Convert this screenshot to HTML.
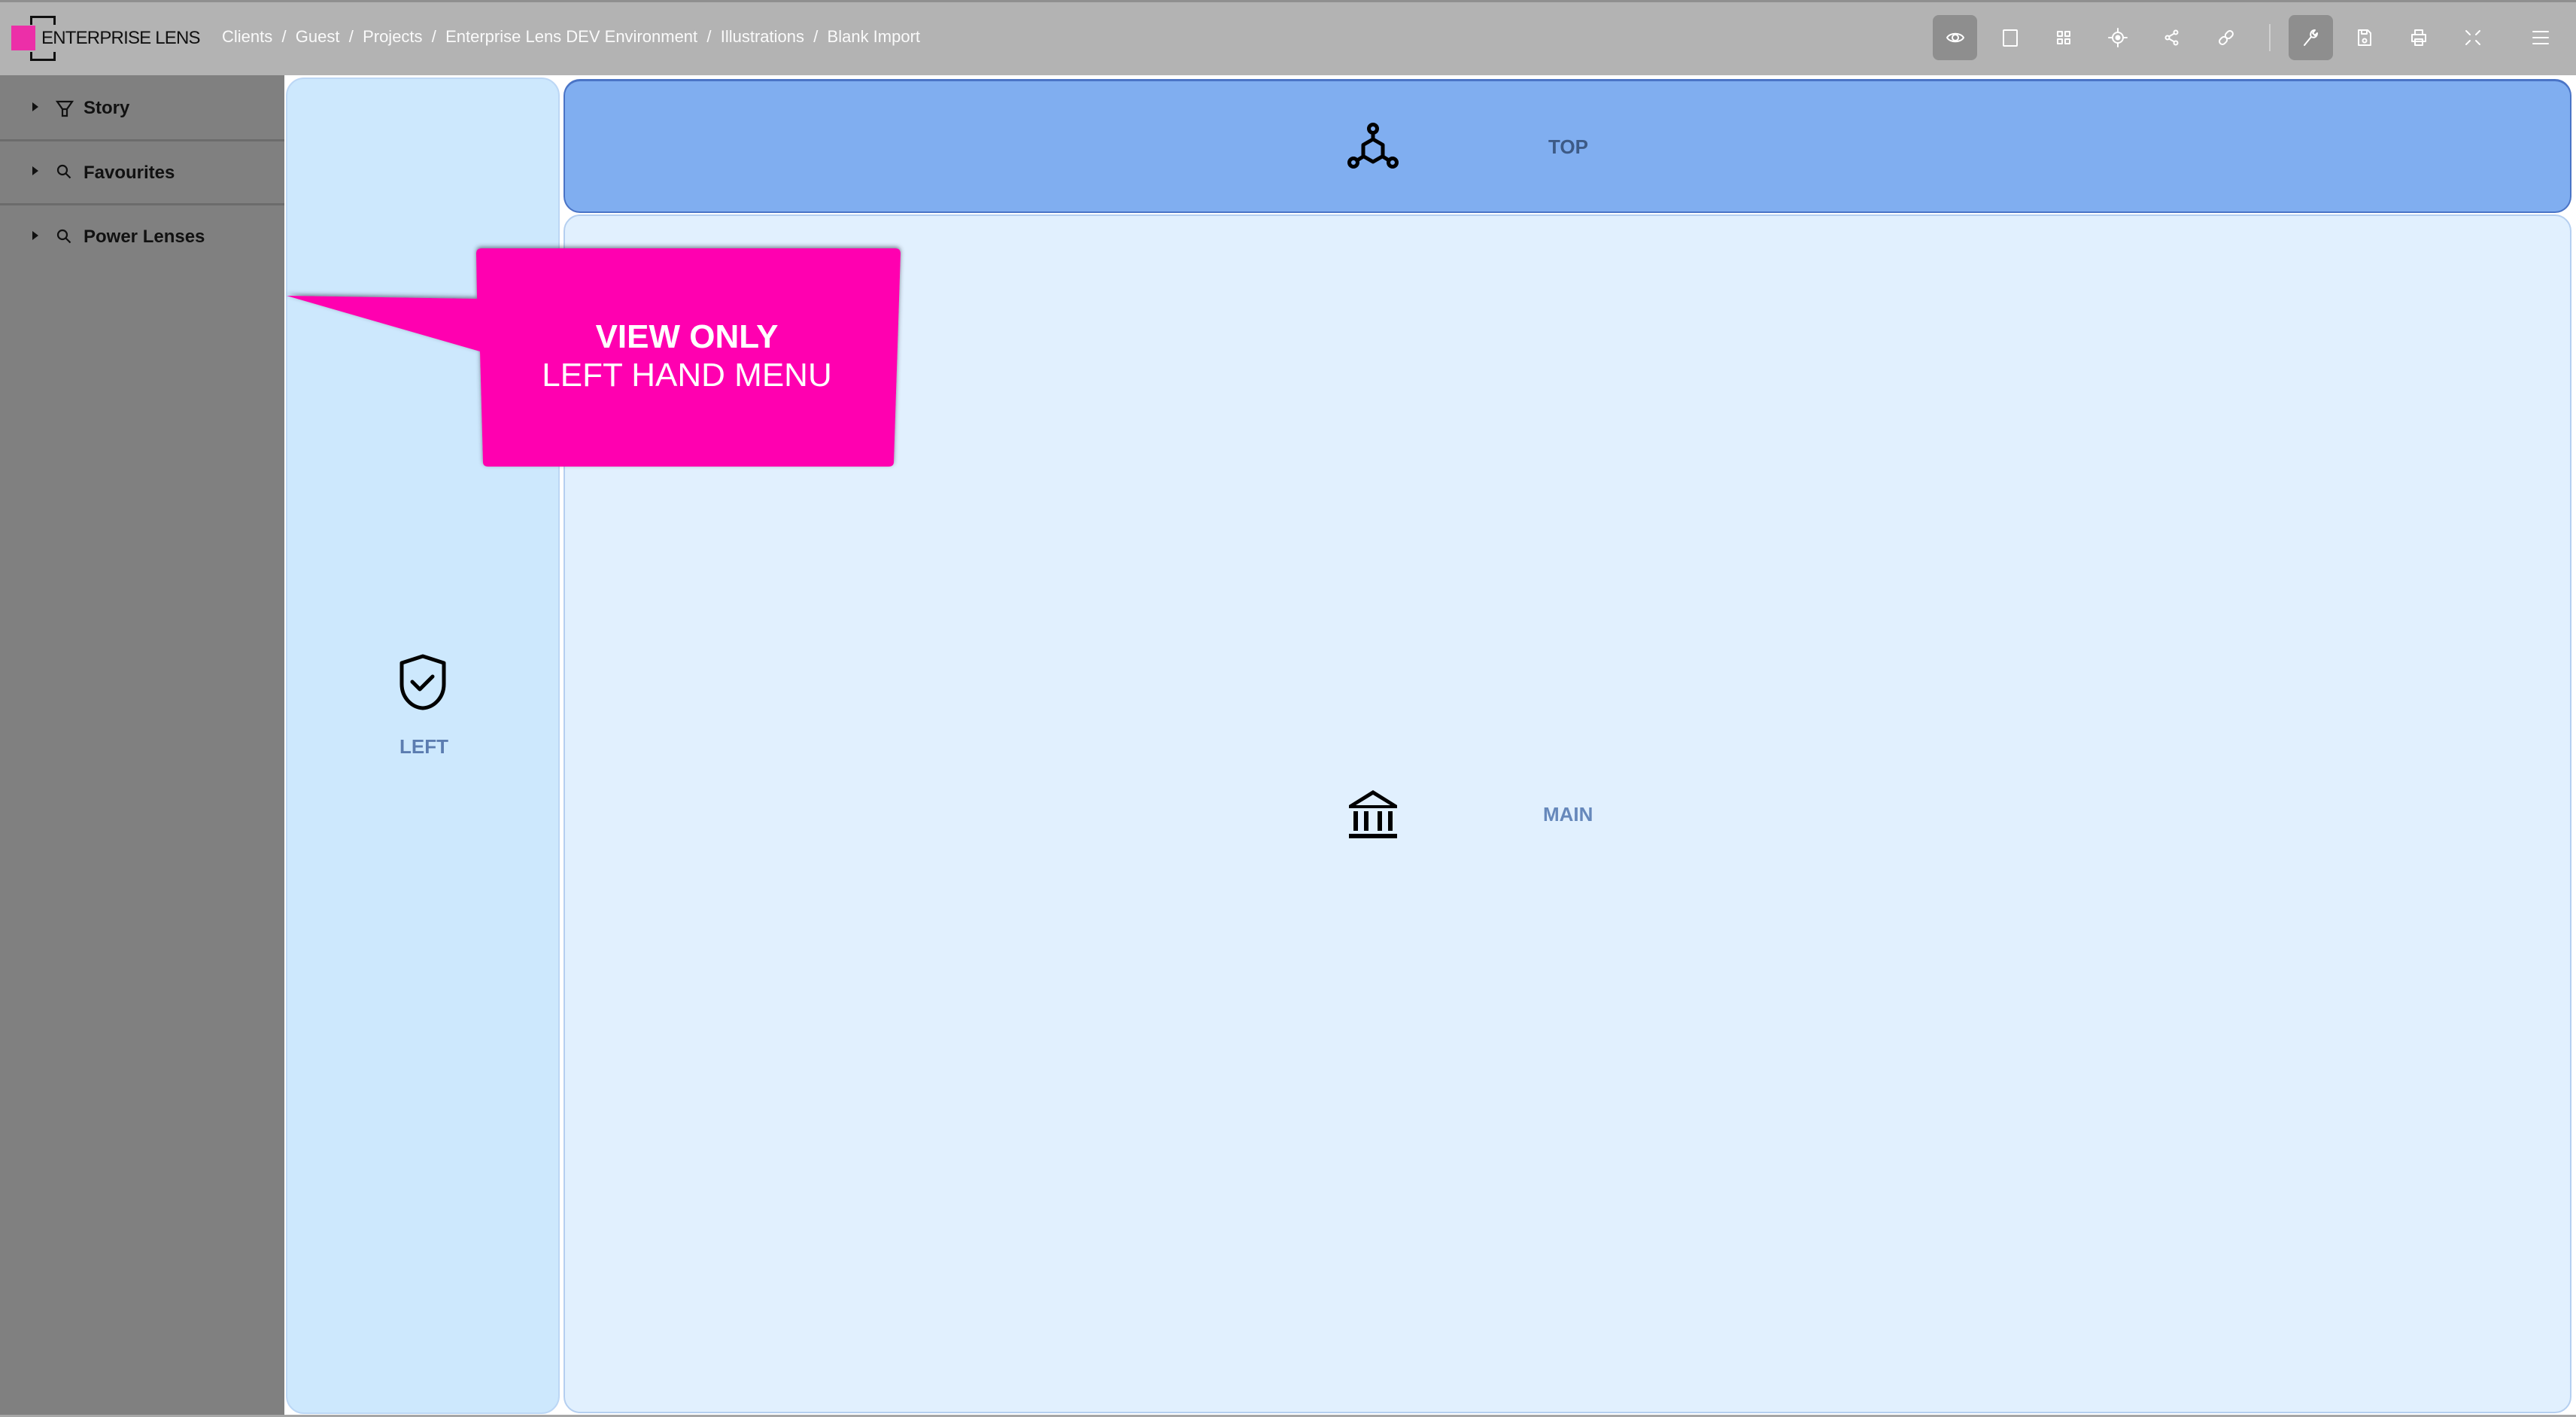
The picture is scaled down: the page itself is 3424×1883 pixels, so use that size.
<!DOCTYPE html>
<html><head><meta charset="utf-8"><style>
*{margin:0;padding:0;box-sizing:border-box}
body{width:3424px;height:1883px;overflow:hidden;background:#fff;font-family:"Liberation Sans",sans-serif;position:relative}
.abs{position:absolute}
#hdr{left:0;top:0;width:3424px;height:100px;background:#b3b3b3;border-top:3px solid #8f8f8f}
#side{left:0;top:100px;width:378px;height:1780px;background:#808080}
#bot{left:0;top:1880px;width:3424px;height:3px;background:#a6a6a6}
.row{position:absolute;left:0;width:378px;font-size:24px;font-weight:bold;color:#111}
.sep{position:absolute;left:0;width:378px;height:3px;background:#6c6c6c}
.crumb{left:295px;top:36px;font-size:22px;color:#fafafa;letter-spacing:0;white-space:pre}
.btn{position:absolute;top:20px;width:59px;height:60px;background:#8e8e8e;border-radius:8px}
.lbl{position:absolute;font-weight:bold;font-size:26px}
</style></head><body>
<div id="hdr" class="abs"></div>
<div class="abs" style="left:15px;top:34px;width:32px;height:33px;background:#ec2fa8"></div>
<div class="abs" style="left:40px;top:21px;width:34px;height:12px;border:3px solid #111;border-bottom:none"></div>
<div class="abs" style="left:40px;top:69px;width:34px;height:12px;border:3px solid #111;border-top:none"></div>
<div class="abs" style="left:55px;top:37px;font-size:24px;color:#111;letter-spacing:-0.8px">ENTERPRISE LENS</div>
<div class="abs crumb">Clients  /  Guest  /  Projects  /  Enterprise Lens DEV Environment  /  Illustrations  /  Blank Import</div>
<div class="btn" style="left:2569px"></div>
<div class="btn" style="left:3042px"></div>
<div class="abs" style="left:3016px;top:32px;width:2px;height:36px;background:#d0d0d0"></div>
<svg class="abs" style="left:0;top:0" width="3424" height="100" fill="none" stroke="#fff" stroke-width="2" stroke-linecap="round" stroke-linejoin="round">
<g transform="translate(2599,50)"><path d="M-11 0C-7-7 7-7 11 0C7 7-7 7-11 0Z"/><circle r="4"/></g>
<rect x="2663" y="40" width="18" height="21" rx="1"/>
<g transform="translate(2743,50)"><rect x="-8" y="-8" width="6" height="6"/><rect x="2" y="-8" width="6" height="6"/><rect x="-8" y="2" width="6" height="6"/><rect x="2" y="2" width="6" height="6"/></g>
<g transform="translate(2815,50)"><circle r="7"/><circle r="2.5" fill="#fff"/><path d="M0-12v5M0 7v5M-12 0h5M7 0h5"/></g>
<g transform="translate(2887,50)"><circle cx="-6" cy="0" r="2.5"/><circle cx="5" cy="-7" r="2.5"/><circle cx="5" cy="7" r="2.5"/><path d="M-4-1.5L3-5.5M-4 1.5L3 5.5"/></g>
<g transform="translate(2959,50) rotate(-45)"><rect x="-11" y="-4" width="11" height="8" rx="4"/><rect x="0" y="-4" width="11" height="8" rx="4"/></g>
<g transform="translate(3071,50)"><path d="M-8 10L1-1M1-1C-1-5 1-10 6-10L3-6 6-3 9-6C9-1 5 1 1-1Z"/></g>
<g transform="translate(3143,50)"><path d="M-8-10h12l4 4v16h-16z"/><path d="M-4-10v5h7v-5"/><circle cx="0" cy="4" r="2.5"/></g>
<g transform="translate(3215,50)"><path d="M-5-4v-6h10v6M-9-4h18v9h-18z"/><rect x="-5" y="2" width="10" height="8"/></g>
<g transform="translate(3287,50)"><path d="M-9-9l5 5M9-9l-5 5M-9 9l5-5M9 9l-5-5"/></g>
<g transform="translate(3377,50)"><path d="M-10-8h20M-10 0h20M-10 8h20"/></g>
</svg>
<div id="side" class="abs"></div>
<div class="sep" style="top:185px"></div>
<div class="sep" style="top:270px"></div>
<svg class="abs" style="left:0;top:100px" width="378" height="260">
<g fill="#111"><path d="M43 36l8 6-8 6z"/><path d="M43 121l8 6-8 6z"/><path d="M43 207l8 6-8 6z"/></g>
<g fill="none" stroke="#111" stroke-width="2.2">
<path d="M76 35h20l-7 10v9h-6v-9z"/><path d="M83 45h6"/>
<circle cx="83" cy="126" r="6"/><path d="M87.5 130.5l6 6"/>
<circle cx="83" cy="212" r="6"/><path d="M87.5 216.5l6 6"/>
</g></svg>
<div class="row" style="top:130px;left:111px">Story</div>
<div class="row" style="top:216px;left:111px">Favourites</div>
<div class="row" style="top:301px;left:111px">Power Lenses</div>
<div class="abs" style="left:380px;top:103px;width:364px;height:1776px;background:#cde8fd;border:2px solid #bcd7f5;border-radius:24px"></div>
<div class="abs" style="left:749px;top:105px;width:2669px;height:178px;background:#80aef0;border:2px solid #4a74c6;border-top-width:3px;border-radius:22px"></div>
<div class="abs" style="left:749px;top:285px;width:2669px;height:1593px;background:#e1f0fe;border:2px solid #b5cff0;border-radius:22px"></div>
<svg class="abs" style="left:1788px;top:162px" width="74" height="66" fill="none" stroke="#000" stroke-width="5" stroke-linejoin="round">
<circle cx="37" cy="9" r="5.5"/><circle cx="11" cy="54" r="5.5"/><circle cx="63" cy="54" r="5.5"/>
<path d="M37 15v8M37 23l-13 7.5v15l13 7.5 13-7.5v-15z"/><path d="M24 46l-8 5M50 46l8 5"/>
</svg>
<div class="lbl" style="left:2058px;top:180px;color:#3d5a85">TOP</div>
<svg class="abs" style="left:528px;top:868px" width="68" height="78" fill="none" stroke="#000" stroke-width="5" stroke-linecap="round" stroke-linejoin="round">
<path d="M34 4L6 13v28c0 18 13 31 28 32 15-1 28-14 28-32V13z"/><path d="M20 38l10 10 17-17"/>
</svg>
<div class="lbl" style="left:531px;top:977px;color:#5b7cb0">LEFT</div>
<svg class="abs" style="left:1790px;top:1048px" width="70" height="68" fill="#000">
<path d="M35 2L3 22v4h64v-4zM35 8l23 14H12z" fill-rule="evenodd"/>
<rect x="9" y="30" width="6" height="26"/><rect x="23" y="30" width="6" height="26"/><rect x="41" y="30" width="6" height="26"/><rect x="55" y="30" width="6" height="26"/>
<rect x="3" y="60" width="64" height="6"/>
</svg>
<div class="lbl" style="left:2051px;top:1067px;color:#6688bb">MAIN</div>
<svg class="abs" style="left:0;top:0" width="1300" height="700">
<defs><filter id="sh" x="-10%" y="-10%" width="120%" height="120%"><feDropShadow dx="0" dy="-2" stdDeviation="3" flood-color="#334" flood-opacity="0.6"/></filter></defs>
<path filter="url(#sh)" fill="#ff00b0" d="M640 330H1190Q1197 330 1197 337L1188 614Q1188 620 1181 620H649Q642 620 642 614L638 467L381 393L634 397L633 337Q633 330 640 330Z"/>
</svg>
<div class="abs" style="left:638px;top:422px;width:550px;text-align:center;color:#fff;font-size:44px;line-height:51px">
<b>VIEW ONLY</b><br>LEFT HAND MENU</div>
<div id="bot" class="abs"></div>
</body></html>
